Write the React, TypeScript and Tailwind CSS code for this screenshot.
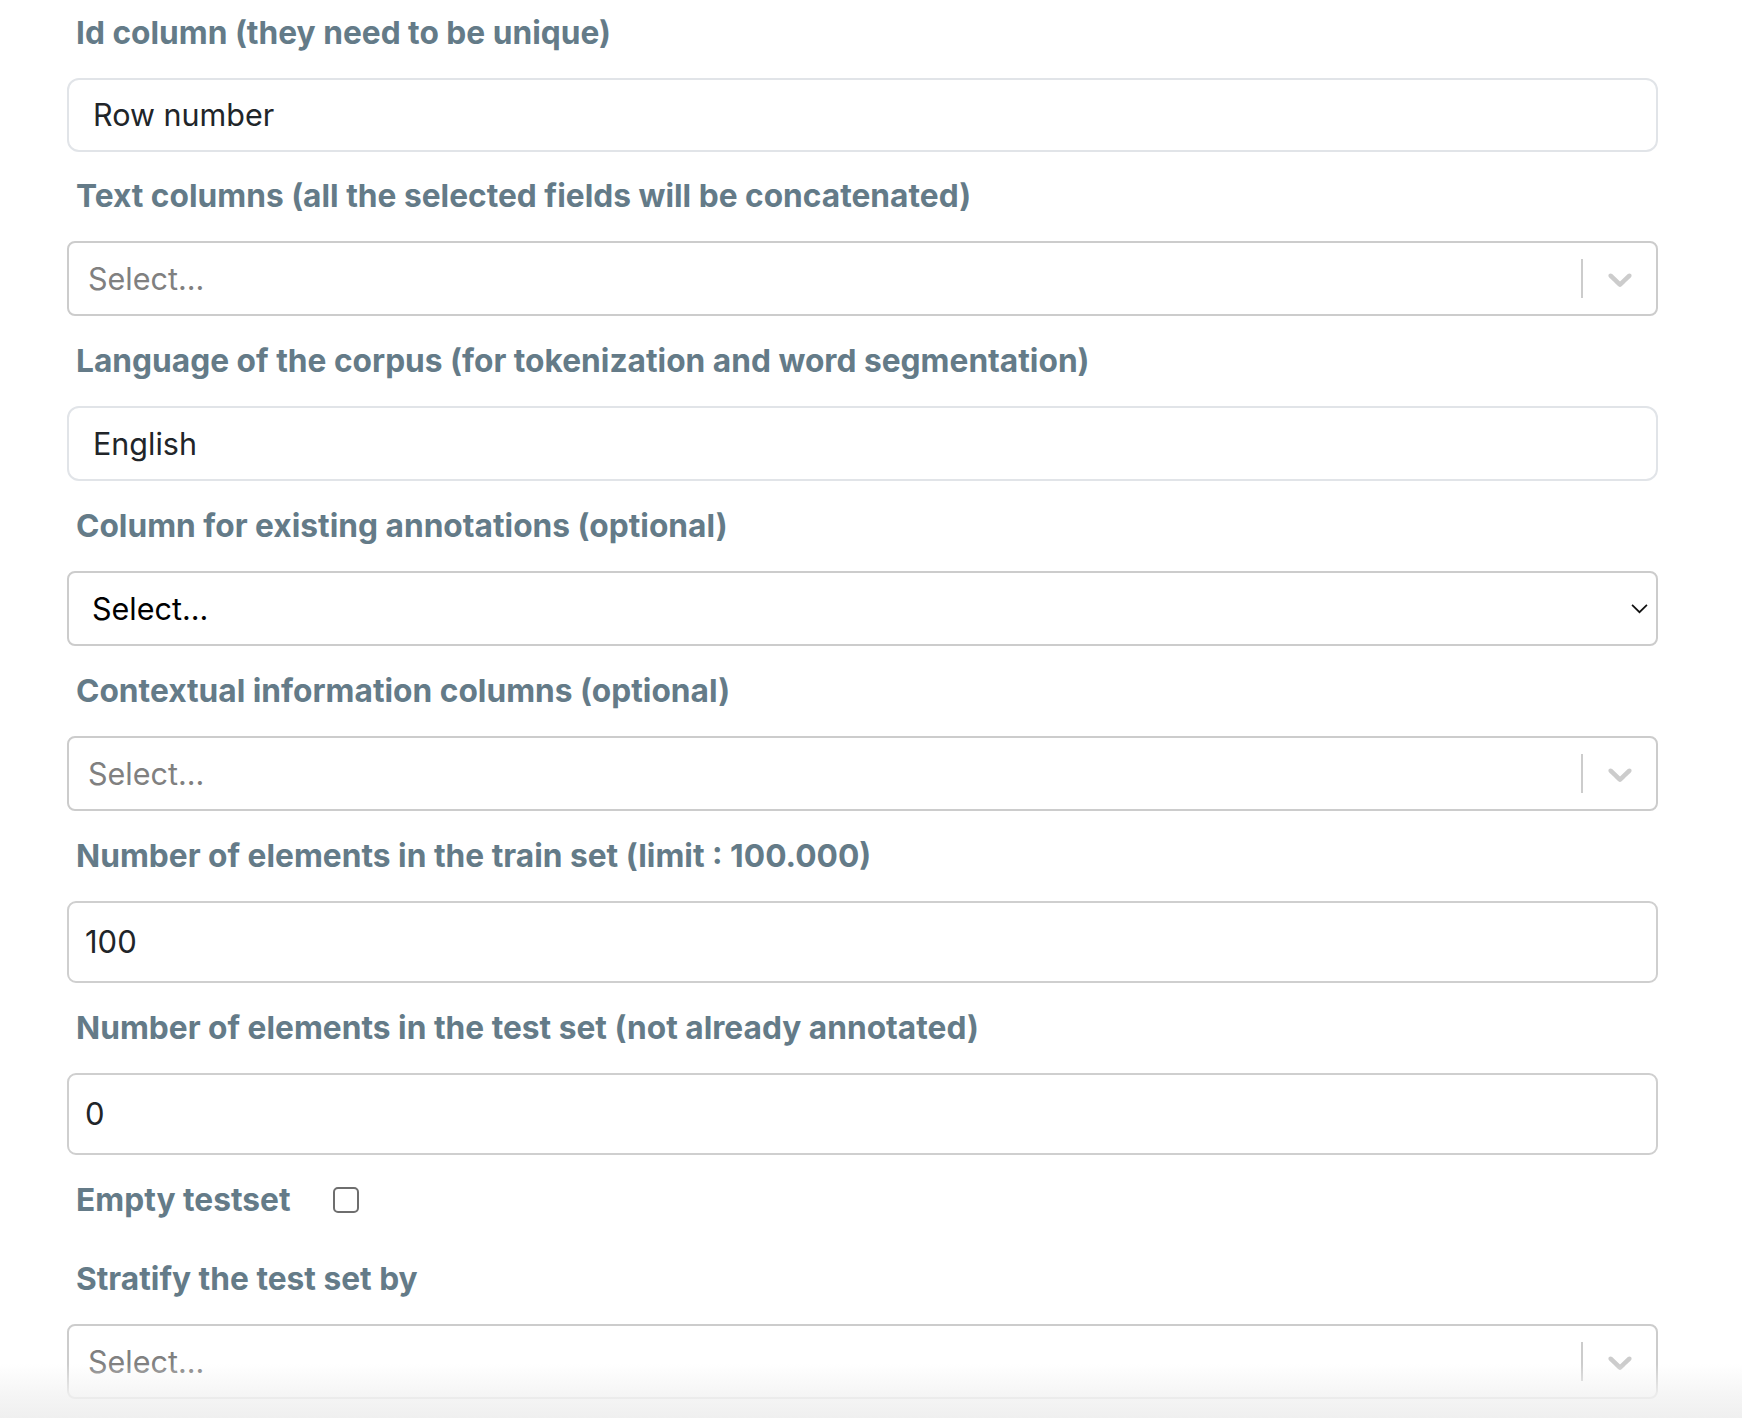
import React from 'react';

const labelCls =
  "block h-[40px] leading-[40px] pl-[9px] mb-[25px] text-[31.7px] font-bold text-[#647b88]";

const Chevron = ({ className }: { className?: string }) => (
  <svg viewBox="0 0 20 20" className={className} fill="currentColor">
    <path d="M4.516 7.548c0.436-0.446 1.043-0.481 1.576 0l3.908 3.747 3.908-3.747c0.533-0.481 1.141-0.446 1.574 0 0.436 0.445 0.408 1.197 0 1.615-0.406 0.418-4.695 4.502-4.695 4.502-0.217 0.223-0.502 0.335-0.787 0.335s-0.57-0.112-0.789-0.335c0 0-4.287-4.084-4.695-4.502s-0.436-1.17 0-1.615z" />
  </svg>
);

const TextField = ({ value, tall, first }: { value: string; tall?: boolean; first?: boolean }) => (
  <div
    className={
      tall
        ? "h-[82px] mb-[25px] flex items-center pl-[16px] border-2 border-[#cfcfcf] rounded-[9px] bg-white text-[31px] text-[#212529]"
        : first
        ? "h-[74px] mb-[24px] flex items-center pl-[24px] border-2 border-[#e1e4e8] rounded-[12px] bg-white text-[30.5px] text-[#212529]"
        : "h-[75px] mb-[25px] flex items-center pl-[24px] border-2 border-[#e1e4e8] rounded-[12px] bg-white text-[30.5px] text-[#212529]"
    }
  >
    {value}
  </div>
);

const ReactSelect = () => (
  <div className="h-[75px] mb-[25px] flex items-center border-2 border-[#cccccc] rounded-[8px] bg-white">
    <div className="flex-1 pl-[19px] text-[30.5px] text-[#808080]">Select...</div>
    <div className="w-[2px] h-[39px] bg-[#cccccc]" />
    <div className="w-[73px] flex items-center justify-center text-[#cccccc]">
      <Chevron className="w-[40px] h-[40px]" />
    </div>
  </div>
);

const NativeSelect = () => (
  <div className="h-[75px] mb-[25px] flex items-center border-2 border-[#cccccc] rounded-[8px] bg-white">
    <div className="flex-1 pl-[23px] text-[30.5px] text-black">Select...</div>
    <svg viewBox="0 0 16 10" className="w-[17px] h-[11px] mr-[8px]" fill="none" stroke="#111" strokeWidth="1.6">
      <path d="M1 1.5l7 7 7-7" />
    </svg>
  </div>
);

export default function App() {
  return (
    <div className="relative min-h-[1418px] bg-white overflow-hidden font-['Inter','Noto_Sans',sans-serif]">
      <div className="pl-[67px] pt-[13px] w-[1658px]">
        <label className={labelCls}>Id column (they need to be unique)</label>
        <TextField value="Row number" first />

        <label className={labelCls}>Text columns (all the selected fields will be concatenated)</label>
        <ReactSelect />

        <label className={labelCls}>Language of the corpus (for tokenization and word segmentation)</label>
        <TextField value="English" />

        <label className={labelCls}>Column for existing annotations (optional)</label>
        <NativeSelect />

        <label className={labelCls}>Contextual information columns (optional)</label>
        <ReactSelect />

        <label className={labelCls}>Number of elements in the train set (limit : 100.000)</label>
        <TextField value="100" tall />

        <label className={labelCls}>Number of elements in the test set (not already annotated)</label>
        <TextField value="0" tall />

        <div className="h-[40px] mb-[39px] flex items-center">
          <label className="pl-[9px] text-[31.7px] font-bold text-[#647b88]">Empty testset</label>
          <div className="ml-[42px] w-[26px] h-[26px] border-2 border-[#6e6e6e] rounded-[5px] bg-white" />
        </div>

        <label className={labelCls}>Stratify the test set by</label>
        <ReactSelect />
      </div>
      <div className="absolute left-0 right-0 bottom-0 h-[60px] bg-gradient-to-b from-white/0 via-[#f3f3f3]/80 to-[#eeeeee]" />
    </div>
  );
}
